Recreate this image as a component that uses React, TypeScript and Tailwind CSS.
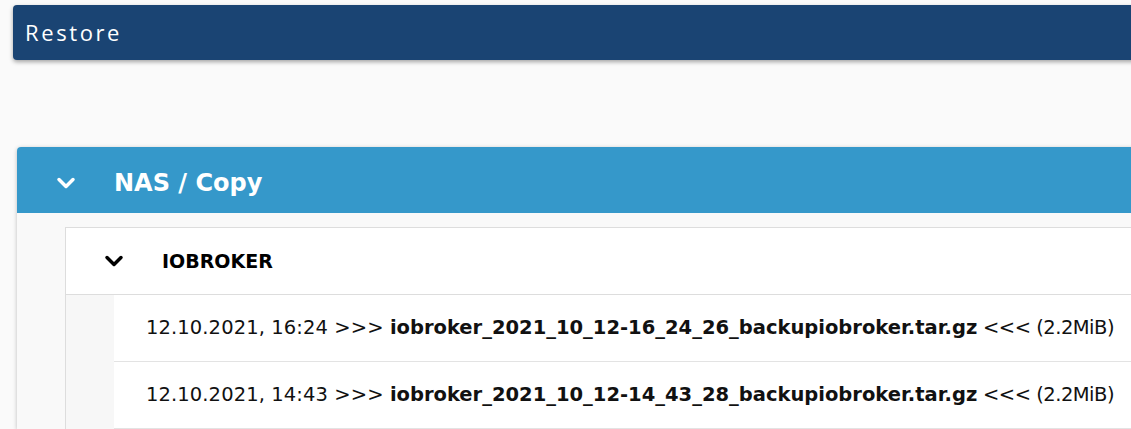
import { ChevronDown } from "lucide-react"

const backups = [
  { date: "12.10.2021, 16:24", file: "iobroker_2021_10_12-16_24_26_backupiobroker.tar.gz", size: "2.2MiB" },
  { date: "12.10.2021, 14:43", file: "iobroker_2021_10_12-14_43_28_backupiobroker.tar.gz", size: "2.2MiB" },
]

export default function App() {
  return (
    <div
      className="h-[429px] w-[1131px] overflow-hidden bg-[#fafafa]"
      style={{ fontFamily: '"DejaVu Sans", "Open Sans", sans-serif' }}
    >
      {/* Title bar */}
      <div className="ml-[13px] mr-[-20px] mt-[5px] flex h-[55px] items-center rounded-[4px] bg-[#1a4473] pl-[12px] shadow-[0_2px_4px_rgba(0,0,0,0.35)]">
        <span className="text-[22px] font-medium tracking-[2.6px] text-white" style={{ fontFamily: '"Open Sans", sans-serif' }}>
          Restore
        </span>
      </div>

      {/* Accordion */}
      <div className="ml-[17px] mr-[-20px] mt-[87px] rounded-t-[4px] bg-[#f9f9f9] shadow-[0_1px_4px_rgba(0,0,0,0.25)]">
        <div className="flex h-[66px] items-center rounded-t-[4px] bg-[#3598ca] pt-[6px] text-white">
          <div className="flex w-[97px] justify-center">
            <ChevronDown className="h-7 w-7" strokeWidth={3} />
          </div>
          <span className="text-[24px] font-bold">NAS / Copy</span>
        </div>

        <div className="pl-[48px] pt-[14px]">
          <div className="border-l border-t border-[#dddddd] bg-white">
            <div className="flex h-[67px] items-center border-b border-[#dddddd]">
              <div className="flex w-[96px] justify-center">
                <ChevronDown className="h-7 w-7 text-black" strokeWidth={3} />
              </div>
              <span className="text-[19px] font-bold text-black">IOBROKER</span>
            </div>
            <div className="bg-[#f7f7f7] pl-[48px]">
              {backups.map((b) => (
                <div key={b.file} className="flex h-[67px] items-center border-b border-[#e3e3e3] bg-white pl-[32px] text-[19.5px] text-[#111]">
                  <span className="whitespace-nowrap">
                    <span className="tracking-[0.1px]">{b.date} &gt;&gt;&gt; </span>
                    <b>{b.file}</b>
                    <span className="tracking-[-0.5px]"> &lt;&lt;&lt; ({b.size})</span>
                  </span>
                </div>
              ))}
            </div>
          </div>
        </div>
      </div>
    </div>
  )
}
